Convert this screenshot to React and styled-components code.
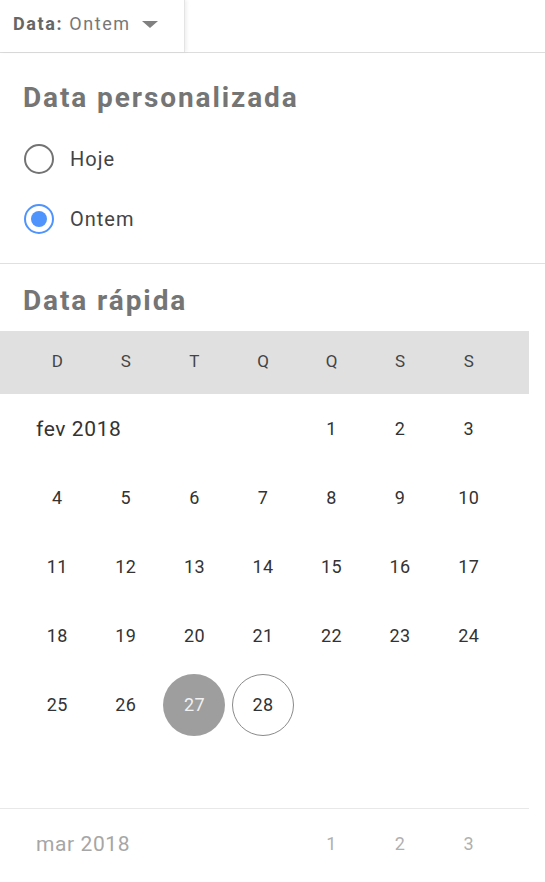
import React from 'react'
import styled, {createGlobalStyle} from 'styled-components'

const GlobalStyle = createGlobalStyle`
  body {
    margin: 0;
    background: #fff;
    font-family: Roboto, 'Liberation Sans', sans-serif;
  }
`

const WEEKDAYS = ['D', 'S', 'T', 'Q', 'Q', 'S', 'S']

// fev 2018 starts on a Thursday
const FEB = [
  [null, null, null, null, 1, 2, 3],
  [4, 5, 6, 7, 8, 9, 10],
  [11, 12, 13, 14, 15, 16, 17],
  [18, 19, 20, 21, 22, 23, 24],
  [25, 26, 27, 28, null, null, null],
  [null, null, null, null, null, null, null],
]
const MAR = [[null, null, null, null, 1, 2, 3]]

export default function App() {
  return (
    <Page>
      <GlobalStyle />
      <TopBar>
        <DropButton>
          <strong>Data:</strong>&nbsp;Ontem
          <Caret />
        </DropButton>
      </TopBar>

      <Section>
        <Heading>Data personalizada</Heading>
        <RadioRow>
          <Radio />
          Hoje
        </RadioRow>
        <RadioRow>
          <Radio checked />
          Ontem
        </RadioRow>
      </Section>

      <Divider />

      <Heading $quick>Data rápida</Heading>
      <Calendar>
        <WeekHeader>
          {WEEKDAYS.map((d, i) => (
            <WeekDay key={i}>{d}</WeekDay>
          ))}
        </WeekHeader>
        <Month rows={FEB} label="fev 2018" selected={27} today={28} />
        <Month rows={MAR} label="mar 2018" muted divider />
      </Calendar>
    </Page>
  )
}

function Month({rows, label, selected, today, muted, divider}) {
  return (
    <MonthBlock $divider={divider}>
      {rows.map((week, r) => (
        <Week key={r}>
          {week.map((day, c) => {
            if (r === 0 && c === 0) {
              return (
                <MonthLabel key={c} $muted={muted}>
                  {label}
                </MonthLabel>
              )
            }
            if (r === 0 && c < 4) return null
            return (
              <Day key={c} $muted={muted}>
                {day && (
                  <DayCircle $selected={day === selected} $today={day === today}>
                    {day}
                  </DayCircle>
                )}
              </Day>
            )
          })}
        </Week>
      ))}
    </MonthBlock>
  )
}

const Page = styled.div`
  width: 545px;
  min-height: 882px;
  background: #fff;
`

const TopBar = styled.div`
  display: flex;
  height: 52px;
  border-bottom: 1px solid #ddd;
`

const DropButton = styled.div`
  display: flex;
  align-items: center;
  width: 171px;
  padding: 0 0 5px 13px;
  border-right: 1px solid #e4e4e4;
  box-shadow: 2px 0 3px rgba(0, 0, 0, 0.06);
  font-size: 18px;
  letter-spacing: 1.6px;
  color: #777;

  strong {
    color: #666;
    font-weight: 700;
  }
`

const Caret = styled.span`
  margin-left: 11px;
  margin-top: 2px;
  width: 0;
  height: 0;
  border-left: 8px solid transparent;
  border-right: 8px solid transparent;
  border-top: 7px solid #808080;
`

const Section = styled.div`
  padding: 30px 0 14px;
`

const Heading = styled.h2`
  margin: 0;
  padding: 0 23px;
  font-size: 28px;
  line-height: 30px;
  font-weight: 700;
  letter-spacing: 1.9px;
  color: #757575;
  margin-top: ${(p) => (p.$quick ? '22px' : '0')};
  margin-bottom: ${(p) => (p.$quick ? '15px' : '16px')};
`

const RadioRow = styled.label`
  display: flex;
  align-items: center;
  gap: 16px;
  height: 60px;
  padding-left: 24px;
  font-size: 20px;
  letter-spacing: 1px;
  color: #444;
`

const Radio = styled.span`
  position: relative;
  box-sizing: border-box;
  width: 30px;
  height: 30px;
  border-radius: 50%;
  border: 2px solid ${(p) => (p.checked ? '#4f94fc' : '#737373')};

  &::after {
    content: '';
    display: ${(p) => (p.checked ? 'block' : 'none')};
    position: absolute;
    top: 5px;
    left: 5px;
    width: 16px;
    height: 16px;
    border-radius: 50%;
    background: #4f94fc;
  }
`

const Divider = styled.hr`
  margin: 0;
  border: 0;
  border-top: 1px solid #e0e0e0;
`

const Calendar = styled.div`
  width: 529px;
`

const WeekHeader = styled.div`
  display: grid;
  grid-template-columns: repeat(7, 1fr);
  height: 63px;
  padding: 0 26px 0 23px;
  background: #e0e0e0;
`

const WeekDay = styled.div`
  display: flex;
  align-items: center;
  justify-content: center;
  padding-bottom: 3px;
  font-size: 17px;
  color: #444;
`

const MonthBlock = styled.div`
  border-top: ${(p) => (p.$divider ? '1px solid #e8e8e8' : '0')};
`

const Week = styled.div`
  display: grid;
  grid-template-columns: repeat(7, 1fr);
  height: 69px;
  padding: 0 26px 0 23px;
`

const MonthLabel = styled.div`
  grid-column: span 4;
  display: flex;
  align-items: center;
  padding-left: 13px;
  font-size: 21px;
  letter-spacing: 0.6px;
  color: ${(p) => (p.$muted ? '#a6a6a6' : '#333')};
`

const Day = styled.div`
  display: flex;
  align-items: center;
  justify-content: center;
  font-size: 18px;
  letter-spacing: 0.4px;
  color: ${(p) => (p.$muted ? '#b0b0b0' : '#333')};
`

const DayCircle = styled.span`
  display: flex;
  align-items: center;
  justify-content: center;
  box-sizing: border-box;
  width: 62px;
  height: 62px;
  border-radius: 50%;
  background: ${(p) => (p.$selected ? '#9e9e9e' : 'transparent')};
  color: ${(p) => (p.$selected ? '#f2f2f2' : 'inherit')};
  border: ${(p) => (p.$today ? '1px solid #8a8a8a' : '0')};
`
